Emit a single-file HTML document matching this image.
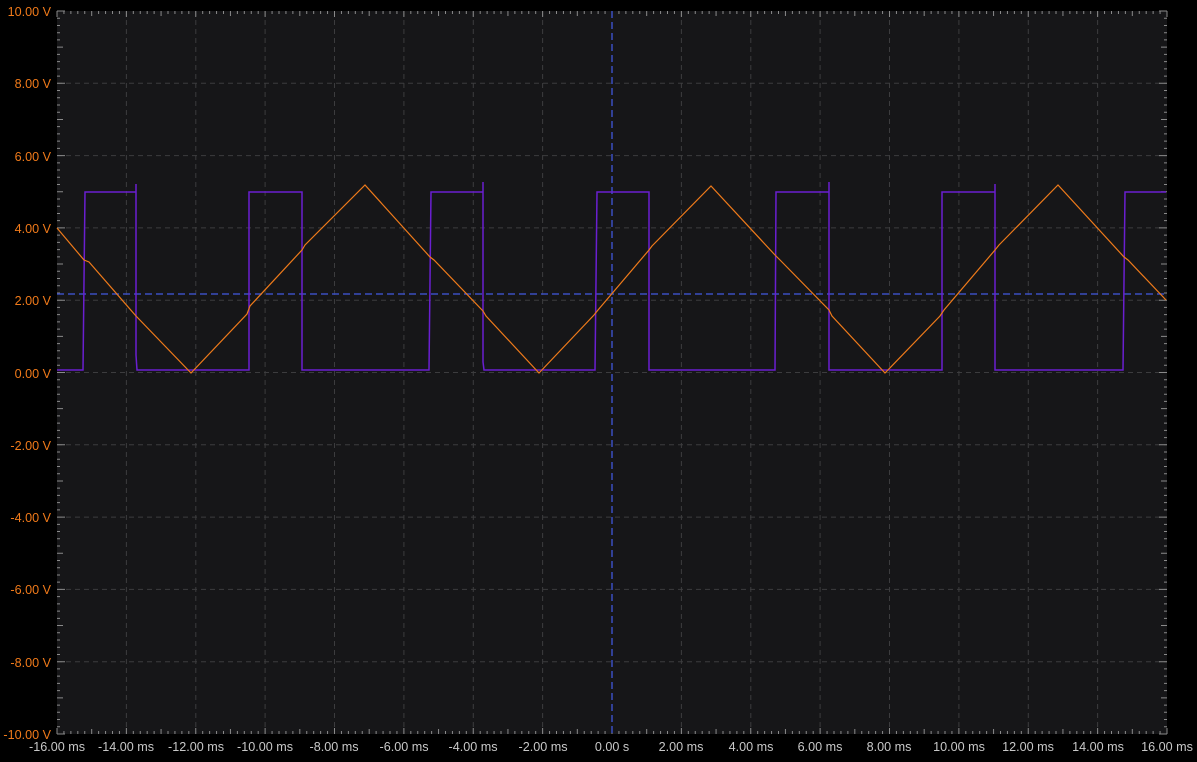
<!DOCTYPE html>
<html><head><style>
html,body{margin:0;padding:0;background:#000;width:1197px;height:762px;overflow:hidden}
svg{display:block}
text{font-family:"Liberation Sans",sans-serif;font-size:12.6px}
</style></head><body>
<svg width="1197" height="762" viewBox="0 0 1197 762">
<rect x="57" y="11" width="1110" height="723" fill="#161618"/>
<g stroke="#3c3c3e" stroke-width="1" stroke-dasharray="5,4" fill="none">
<path d="M126.4 11V734M195.8 11V734M265.1 11V734M334.5 11V734M403.9 11V734M473.3 11V734M542.6 11V734M681.4 11V734M750.8 11V734M820.1 11V734M889.5 11V734M958.9 11V734M1028.3 11V734M1097.6 11V734"/>
<path d="M57 83.3H1167M57 155.6H1167M57 227.9H1167M57 300.2H1167M57 372.5H1167M57 444.8H1167M57 517.1H1167M57 589.4H1167M57 661.7H1167"/>
</g>
<g id="ticks" stroke="#8a8a8a" stroke-width="1"></g>
<path d="M612 11V734" stroke="#3a4fc0" stroke-width="1.5" stroke-dasharray="7,4"/>
<path d="M57 294H1167" stroke="#3a4fc0" stroke-width="1.5" stroke-dasharray="7,4"/>
<path fill="none" stroke="#6a1fd0" stroke-width="1.5" d="M57 370H83L85 192H136V184V355L137 370H249V192H302V370H429V370L431 192H483V182V362L484 370H595L597 192H649V370H775L776 192H829V182V370H942V192H995V184V370H1123L1125 192H1166"/>
<path fill="none" stroke="#ee7a1a" stroke-width="1.2" d="M57 228L84 260L89 262L136 316L191 373L247 314L250 306L302 250L305 245L365 185L430 257L434 260L483 311L486 316L539 373L594 315L598 310L649 250L652 246L711 186L775 255L780 260L829 310L832 316L885 373L940 316L944 310L995 250L999 245L1058 185L1124 257L1128 260L1166 300"/>
<g fill="#f07a1a" text-anchor="end">
<text x="51" y="16">10.00 V</text><text x="51" y="88">8.00 V</text><text x="51" y="161">6.00 V</text><text x="51" y="233">4.00 V</text><text x="51" y="305">2.00 V</text><text x="51" y="378">0.00 V</text><text x="51" y="450">-2.00 V</text><text x="51" y="522">-4.00 V</text><text x="51" y="594">-6.00 V</text><text x="51" y="667">-8.00 V</text><text x="51" y="739">-10.00 V</text>
</g>
<g fill="#c8c8c8" text-anchor="middle">
<text x="57" y="751">-16.00 ms</text><text x="126" y="751">-14.00 ms</text><text x="196" y="751">-12.00 ms</text><text x="265" y="751">-10.00 ms</text><text x="334" y="751">-8.00 ms</text><text x="404" y="751">-6.00 ms</text><text x="473" y="751">-4.00 ms</text><text x="543" y="751">-2.00 ms</text><text x="612" y="751">0.00 s</text><text x="681" y="751">2.00 ms</text><text x="751" y="751">4.00 ms</text><text x="820" y="751">6.00 ms</text><text x="889" y="751">8.00 ms</text><text x="959" y="751">10.00 ms</text><text x="1028" y="751">12.00 ms</text><text x="1098" y="751">14.00 ms</text><text x="1167" y="751">16.00 ms</text>
</g>
</svg>
<script>
var g=document.getElementById('ticks'),d='';
for(var i=0;i<=160;i++){var x=57+i*1110/160;var L=(i%10==0)?6:(i%5==0?5:3);d+='M'+x+' 11v'+L+'M'+x+' 734v-'+L;}
for(var j=0;j<=100;j++){var y=11+j*723/100;var L=(j%10==0)?8:(j%5==0?6:3);d+='M57 '+y+'h'+L+'M1167 '+y+'h-'+L;}
var p=document.createElementNS('http://www.w3.org/2000/svg','path');p.setAttribute('d',d);g.appendChild(p);
</script>
</body></html>
